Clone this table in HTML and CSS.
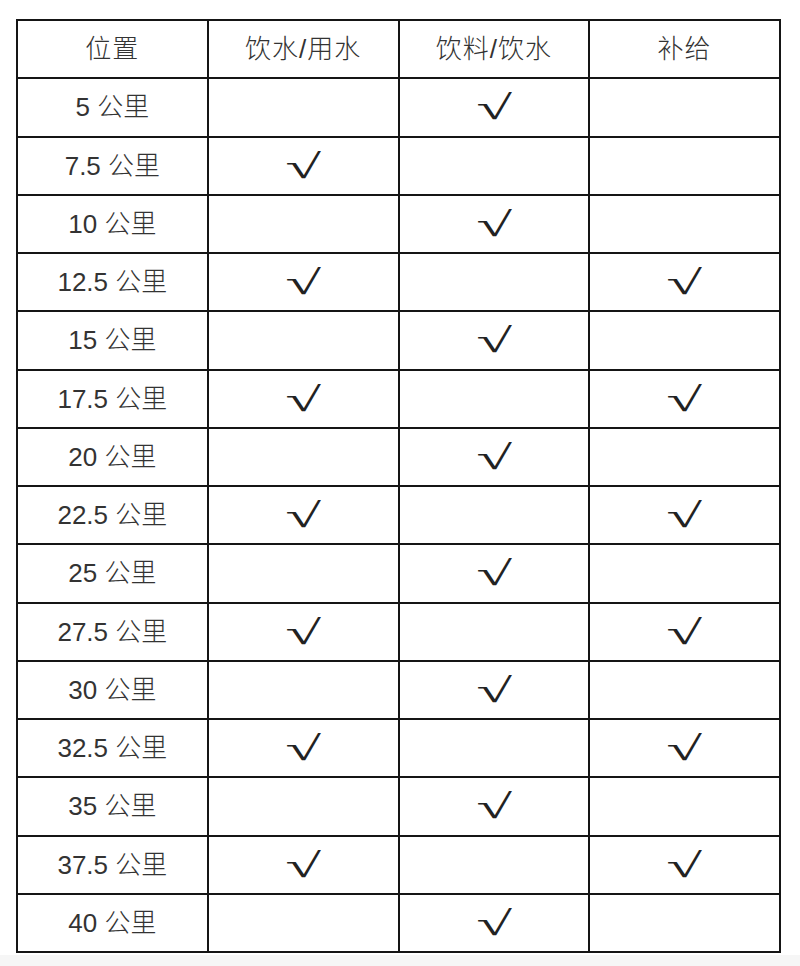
FILE: index.html
```html
<!DOCTYPE html>
<html lang="zh-CN">
<head>
<meta charset="utf-8">
<title>补给站</title>
<link rel="stylesheet" href="styles.css">
</head>
<body>
<div class="page">
<table class="supply">
<thead>
<tr><th>位置</th><th>饮水/用水</th><th>饮料/饮水</th><th>补给</th></tr>
</thead>
<tbody>
<tr><td>5 公里</td><td></td><td><span class="ck">√</span></td><td></td></tr>
<tr><td>7.5 公里</td><td><span class="ck">√</span></td><td></td><td></td></tr>
<tr><td>10 公里</td><td></td><td><span class="ck">√</span></td><td></td></tr>
<tr><td>12.5 公里</td><td><span class="ck">√</span></td><td></td><td><span class="ck">√</span></td></tr>
<tr><td>15 公里</td><td></td><td><span class="ck">√</span></td><td></td></tr>
<tr><td>17.5 公里</td><td><span class="ck">√</span></td><td></td><td><span class="ck">√</span></td></tr>
<tr><td>20 公里</td><td></td><td><span class="ck">√</span></td><td></td></tr>
<tr><td>22.5 公里</td><td><span class="ck">√</span></td><td></td><td><span class="ck">√</span></td></tr>
<tr><td>25 公里</td><td></td><td><span class="ck">√</span></td><td></td></tr>
<tr><td>27.5 公里</td><td><span class="ck">√</span></td><td></td><td><span class="ck">√</span></td></tr>
<tr><td>30 公里</td><td></td><td><span class="ck">√</span></td><td></td></tr>
<tr><td>32.5 公里</td><td><span class="ck">√</span></td><td></td><td><span class="ck">√</span></td></tr>
<tr><td>35 公里</td><td></td><td><span class="ck">√</span></td><td></td></tr>
<tr><td>37.5 公里</td><td><span class="ck">√</span></td><td></td><td><span class="ck">√</span></td></tr>
<tr><td>40 公里</td><td></td><td><span class="ck">√</span></td><td></td></tr>
</tbody>
</table>
</div>
</body>
</html>
```
FILE: styles.css
```css
html, body {
  margin: 0;
  padding: 0;
  background: #f6f6f6;
}
.page {
  background: #ffffff;
  padding: 19px 0 3px 16px;
  height: 933px;
}
.supply {
  border-collapse: collapse;
  table-layout: fixed;
  width: 765px;
  font-family: "Liberation Sans", "Noto Sans CJK SC", sans-serif;
  font-size: 26px;
  color: #333;
}
.supply th,
.supply td {
  border: 2px solid #151515;
  height: 56.25px;
  padding: 0;
  text-align: center;
  vertical-align: middle;
  font-weight: 300;
  line-height: 1;
}
.supply th {
  letter-spacing: 1px;
}
.ck {
  display: inline-block;
  font-family: "Liberation Serif", serif;
  font-size: 34px;
  line-height: 1;
  color: #222;
  transform: translateY(1px) scaleX(1.9);
}
```
